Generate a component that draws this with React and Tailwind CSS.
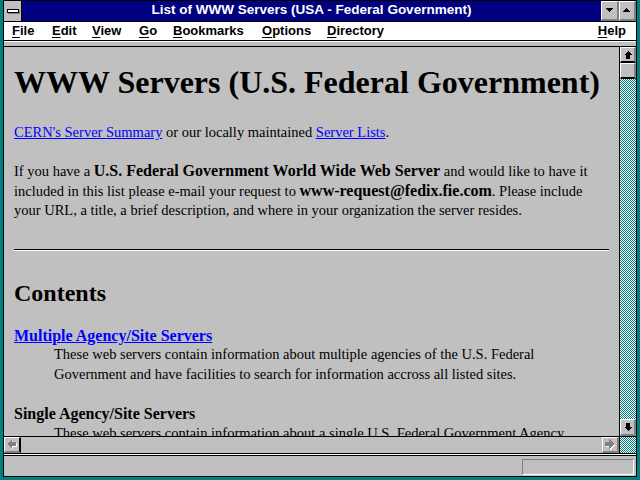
import React from "react";

const bevel =
  "flex items-center justify-center bg-[#c0c0c0] border-t border-l border-t-white border-l-white border-r-2 border-b-2 border-r-[#808080] border-b-[#808080]";

const dither =
  "bg-[repeating-conic-gradient(#008080_0_25%,#ffffff_0_50%)] bg-[length:2px_2px]";

const ArrowUp = () => (
  <svg width="8" height="8" viewBox="0 0 8 8" shapeRendering="crispEdges">
    <polygon points="4,0 8,4 6,4 6,8 2,8 2,4 0,4" fill="#000" />
  </svg>
);

const ArrowDown = () => (
  <svg width="8" height="8" viewBox="0 0 8 8" shapeRendering="crispEdges">
    <polygon points="4,8 8,4 6,4 6,0 2,0 2,4 0,4" fill="#000" />
  </svg>
);

const GreyLeft = () => (
  <svg width="11" height="11" viewBox="0 0 11 11" shapeRendering="crispEdges">
    <polygon points="1,6 6,1 6,4 10,4 10,8 6,8 6,11" fill="#ffffff" />
    <polygon points="0,5 5,0 5,3 9,3 9,7 5,7 5,10" fill="#808080" />
  </svg>
);

const GreyRight = () => (
  <svg width="11" height="11" viewBox="0 0 11 11" shapeRendering="crispEdges">
    <polygon points="10,6 5,1 5,4 1,4 1,8 5,8 5,11" fill="#ffffff" />
    <polygon points="9,5 4,0 4,3 0,3 0,7 4,7 4,10" fill="#808080" />
  </svg>
);

const Tri = ({ up }) => (
  <svg width="8" height="5" viewBox="0 0 8 5" shapeRendering="crispEdges">
    <polygon points={up ? "0,4 7,4 3.5,0" : "0,0 7,0 3.5,4"} fill="#000" />
  </svg>
);

const menus = [
  { k: "F", rest: "ile", w: "w-[40px]" },
  { k: "E", rest: "dit", w: "w-[40px]" },
  { k: "V", rest: "iew", w: "w-[47px]" },
  { k: "G", rest: "o", w: "w-[34px]" },
  { k: "B", rest: "ookmarks", w: "w-[89px]" },
  { k: "O", rest: "ptions", w: "w-[65px]" },
  { k: "D", rest: "irectory", w: "w-[80px]" },
];

const MenuItem = ({ k, rest, w }) => (
  <span className={`${w} shrink-0`}>
    <span className="underline underline-offset-2">{k}</span>
    {rest}
  </span>
);

const B = ({ children }) => (
  <b className="text-[16px] leading-none">{children}</b>
);

export default function App() {
  return (
    <div className="w-[640px] h-[480px] bg-[#008080] px-[3px] pb-[3px] flex">
      <div className="flex-1 flex flex-col border border-black bg-[#c0c0c0] font-['Liberation_Sans',Arial,sans-serif]">
        {/* title bar */}
        <div className="h-[21px] shrink-0 flex border-b border-black">
          <div className="w-[18px] border-r border-black bg-[#c0c0c0] flex items-center justify-center">
            <div className="w-[12px] h-[4px] bg-white border border-black shadow-[1px_1px_0_#808080]" />
          </div>
          <div className="flex-1 bg-[#000080] text-white text-[13.5px] font-bold flex items-center justify-center pb-[1px]">
            List of WWW Servers (USA - Federal Government)
          </div>
          <div className={`w-[18px] border-l border-black ${bevel}`}>
            <Tri />
          </div>
          <div className={`w-[17px] border-l border-black ${bevel}`}>
            <Tri up />
          </div>
        </div>

        {/* menu bar */}
        <div className="h-[19px] shrink-0 bg-white border-b border-black flex items-center pl-[8px] pr-[10px] text-[13px] font-bold text-black">
          {menus.map((m) => (
            <MenuItem key={m.k} {...m} />
          ))}
          <span className="ml-auto">
            <span className="underline underline-offset-2">H</span>elp
          </span>
        </div>

        {/* collapsed toolbar */}
        <div className="h-[6px] shrink-0 bg-[#c0c0c0] border-t border-t-white border-b border-b-black" />

        {/* document + scrollbars */}
        <div className="flex-1 flex flex-col min-h-0">
          <div className="flex-1 flex min-h-0">
            <div className="flex-1 overflow-hidden bg-[#c0c0c0] px-[10px] font-['Liberation_Serif','Times_New_Roman',serif] text-black text-[14.5px] leading-[19.5px]">
              <h1 className="mt-[17px] text-[32px] font-bold leading-[37px] whitespace-nowrap">
                WWW Servers (U.S. Federal Government)
              </h1>
              <p className="mt-[22px]">
                <a className="text-[#0000ff] underline">CERN's Server Summary</a> or
                our locally maintained{" "}
                <a className="text-[#0000ff] underline">Server Lists</a>.
              </p>
              <p className="mt-[19.5px] whitespace-nowrap">
                If you have a <B>U.S. Federal Government World Wide Web Server</B>{" "}
                and would like to have it
                <br />
                included in this list please e-mail your request to{" "}
                <B>www-request@fedix.fie.com</B>. Please include
                <br />
                your URL, a title, a brief description, and where in your
                organization the server resides.
              </p>
              <div className="mt-[28px] h-[2px] border-t border-t-black border-b border-b-white" />
              <h2 className="mt-[28px] text-[24px] font-bold leading-[28px]">Contents</h2>
              <dl>
                <dt className="mt-[19px] text-[16px] font-bold">
                  <a className="text-[#0000ff] underline">Multiple Agency/Site Servers</a>
                </dt>
                <dd className="pl-[40px] whitespace-nowrap">
                  These web servers contain information about multiple agencies of
                  the U.S. Federal
                  <br />
                  Government and have facilities to search for information accross
                  all listed sites.
                </dd>
                <dt className="mt-[20px] text-[16px] font-bold">Single Agency/Site Servers</dt>
                <dd className="pl-[40px] whitespace-nowrap">
                  These web servers contain information about a single U.S. Federal
                  Government Agency.
                </dd>
              </dl>
            </div>

            {/* vertical scrollbar */}
            <div className="w-[17px] shrink-0 border-l border-black flex flex-col">
              <div className={`h-[16px] shrink-0 border-b border-b-black ${bevel}`}>
                <ArrowUp />
              </div>
              <div className={`h-[16px] shrink-0 border-b border-b-black ${bevel}`} />
              <div className={`flex-1 ${dither}`} />
              <div className={`h-[17px] shrink-0 border-t border-t-black ${bevel}`}>
                <ArrowDown />
              </div>
            </div>
          </div>

          {/* horizontal scrollbar */}
          <div className="h-[17px] shrink-0 border-t border-black flex">
            <div className={`w-[17px] shrink-0 border-r border-r-black ${bevel}`}>
              <GreyLeft />
            </div>
            <div className="flex-1 bg-[#c0c0c0]" />
            <div className={`w-[17px] shrink-0 border-l border-l-black ${bevel}`}>
              <GreyRight />
            </div>
            <div className={`w-[17px] shrink-0 border-l border-black ${dither}`} />
          </div>
        </div>

        {/* status bar */}
        <div className="h-[2px] shrink-0 border-t border-t-black bg-white" />
        <div className="h-[21px] shrink-0 border-t border-black bg-[#c0c0c0] flex pt-[3px] pr-[2px]">
          <div className="ml-auto w-[112px] h-[16px] border-t border-l border-t-[#808080] border-l-[#808080] border-b border-r border-b-white border-r-white" />
        </div>
      </div>
    </div>
  );
}
